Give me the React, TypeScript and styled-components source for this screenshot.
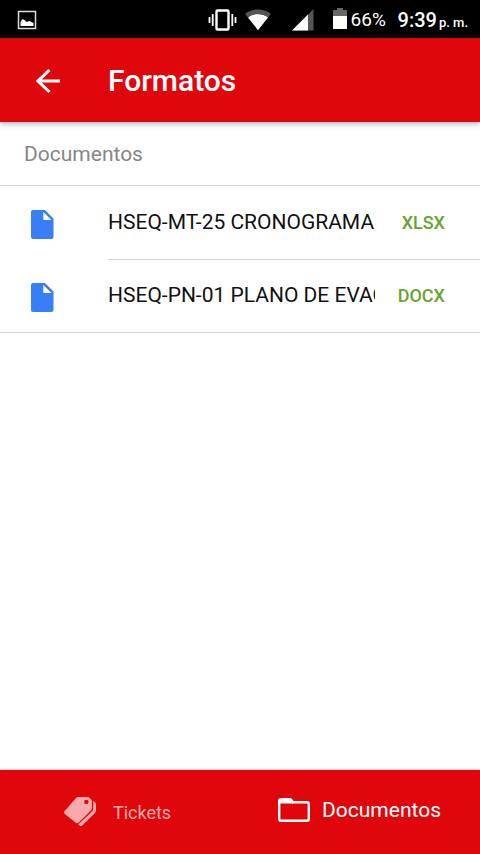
import React from "react";
import styled, { createGlobalStyle } from "styled-components";

const GlobalStyle = createGlobalStyle`
  * { box-sizing: border-box; }
  body {
    margin: 0;
    background: #fff;
    font-family: Roboto, sans-serif;
  }
`;

const Screen = styled.div`
  display: flex;
  flex-direction: column;
  min-height: 100vh;
`;

const StatusBar = styled.div`
  display: flex;
  align-items: center;
  height: 38px;
  padding: 1px 12px 0 17px;
  background: #000;
  color: #fff;
`;

const StatusIcons = styled.div`
  display: flex;
  align-items: center;
  margin-left: auto;
`;

const StatusIcon = styled.svg<{ $gap?: number }>`
  display: block;
  flex: none;
  margin-right: ${(p) => p.$gap ?? 0}px;
`;

const Battery = styled.span`
  width: 47px;
  font-size: 19px;
  line-height: 24px;
`;

const Clock = styled.span`
  font-size: 20px;
  font-weight: 500;
  line-height: 24px;
  white-space: nowrap;
`;

const Meridiem = styled.small`
  margin-left: 2px;
  font-size: 13px;
  line-height: 13px;
`;

const Toolbar = styled.header`
  position: relative;
  display: flex;
  align-items: center;
  height: 84px;
  padding: 2px 24px 0;
  background: #e0070c;
  color: #fff;
  box-shadow: 0 1px 6px rgba(0, 0, 30, 0.4);
`;

const BackButton = styled.button`
  display: flex;
  align-items: center;
  justify-content: center;
  width: 48px;
  height: 48px;
  margin-right: 36px;
  padding: 0;
  border: 0;
  background: none;
  color: inherit;
`;

const Title = styled.h1`
  margin: 0;
  font-size: 30px;
  font-weight: 500;
  line-height: 36px;
`;

const Content = styled.main`
  flex: 1;
`;

const ListHeader = styled.h2`
  margin: 0;
  padding: 18px 24px 17px;
  border-bottom: 1px solid #d6d6d6;
  color: #868686;
  font-size: 21px;
  font-weight: 400;
  line-height: 28px;
`;

const List = styled.ul`
  margin: 0;
  padding: 0;
  border-bottom: 1px solid #d6d6d6;
  list-style: none;
`;

const Row = styled.li`
  display: flex;
  align-items: stretch;

  & + & > a {
    border-top: 1px solid #d6d6d6;
  }
`;

const FileIcon = styled.svg`
  flex: none;
  align-self: center;
  width: 23px;
  height: 30px;
  margin: 4px 54px 0 31px;
`;

const FileLink = styled.a`
  display: flex;
  flex: 1;
  align-items: center;
  min-width: 0;
  height: 73px;
  padding-right: 35px;
  color: #111;
  text-decoration: none;
`;

const FileName = styled.span`
  flex: 1;
  min-width: 0;
  padding-bottom: 2px;
  overflow: hidden;
  font-size: 21px;
  line-height: 28px;
  white-space: nowrap;
`;

const FileType = styled.span`
  margin-left: 23px;
  color: #66a52f;
  font-size: 18px;
  font-weight: 500;
  line-height: 24px;
`;

const TabBar = styled.nav`
  display: grid;
  grid-template-columns: 1fr 1fr;
  height: 84px;
  background: #e0070c;
  box-shadow: 0 -1px 2px rgba(0, 0, 40, 0.16);
`;

const Tab = styled.button<{ $active?: boolean }>`
  display: flex;
  align-items: center;
  justify-content: center;
  gap: ${(p) => (p.$active ? 12 : 16)}px;
  padding: ${(p) => (p.$active ? "0 1px 5px 0" : "0 5px 1px 0")};
  border: 0;
  background: none;
  color: ${(p) => (p.$active ? "#fff" : "#f8a9ab")};
  font-family: inherit;
  font-size: ${(p) => (p.$active ? 21 : 18)}px;
  line-height: 28px;
`;

const TabLabel = styled.span<{ $active?: boolean }>`
  padding-top: ${(p) => (p.$active ? 0 : 3)}px;
`;

const files = [
  { name: "HSEQ-MT-25 CRONOGRAMA", type: "XLSX" },
  { name: "HSEQ-PN-01 PLANO DE EVAC", type: "DOCX" },
];

export default function App() {
  return (
    <>
      <GlobalStyle />
      <Screen>
        <StatusBar>
          <StatusIcon width="20" height="20" viewBox="0 0 20 20" aria-hidden="true">
            <rect x="1.500" y="1.500" width="17" height="17" fill="none" stroke="#ddd" strokeWidth="1.500" />
            <path d="M3.500 16v-4l2-3 2 1 2 2 3-1 2 1 2 1v3z" fill="#fff" />
          </StatusIcon>
          <StatusIcons>
            <StatusIcon $gap={8} width="29" height="22" viewBox="0 0 29 22" aria-hidden="true">
              <g fill="none" stroke="#fff">
                <rect x="8.500" y="1.500" width="12" height="19" rx="1" strokeWidth="2.400" />
                <path d="M1.500 8v6M27.500 8v6M4.700 5v12M24.300 5v12" strokeWidth="1.800" />
              </g>
            </StatusIcon>
            <StatusIcon $gap={21} width="26" height="22" viewBox="0 0 26 22" aria-hidden="true">
              <path d="M13 21L0 5C7-1 19-1 26 5z" fill="#555" />
              <path d="M13 21L3.700 8.500c5-4 13.600-4 18.600 0z" fill="#fff" />
              <path d="M0 5l3 4L13 21.500 23 9l3-4v17H0z" fill="#000" />
              <path d="M13 21L3.200 8.800c5-4.400 14.600-4.400 19.600 0z" fill="#fff" />
            </StatusIcon>
            <StatusIcon $gap={19} width="22" height="22" viewBox="0 0 22 22" aria-hidden="true">
              <path d="M0 21.500L21.500 0v21.500z" fill="#555" />
              <path d="M0 21.500L16 5.500v16z" fill="#fff" />
            </StatusIcon>
            <StatusIcon $gap={4} width="14" height="24" viewBox="0 0 14 24" aria-hidden="true">
              <path d="M0 2h4V0h6v2h4v7H0z" fill="#666" />
              <path d="M0 8h14v13H0z" fill="#fff" />
            </StatusIcon>
            <Battery>66%</Battery>
            <Clock>
              9:39<Meridiem>p. m.</Meridiem>
            </Clock>
          </StatusIcons>
        </StatusBar>
        <Toolbar>
          <BackButton type="button" aria-label="Volver">
            <svg width="24" height="24" viewBox="0 0 24 24" fill="none" stroke="currentColor" strokeWidth="3">
              <path d="M24 12H2M13.500 1L2 12l11.500 11" />
            </svg>
          </BackButton>
          <Title>Formatos</Title>
        </Toolbar>
        <Content>
          <ListHeader>Documentos</ListHeader>
          <List>
            {files.map((file) => (
              <Row key={file.name}>
                <FileIcon viewBox="0 0 23 30" aria-hidden="true">
                  <path
                    fill="#387ef5"
                    fillRule="evenodd"
                    d="M2 0H14l8.500 8.500v18.500a2 2 0 0 1-2 2H2A2 2 0 0 1 0 27V2A2 2 0 0 1 2 0zM12.300 2v8H20.500z"
                  />
                </FileIcon>
                <FileLink href="#">
                  <FileName>{file.name}</FileName>
                  <FileType>{file.type}</FileType>
                </FileLink>
              </Row>
            ))}
          </List>
        </Content>
        <TabBar>
          <Tab type="button">
            <svg width="33" height="30" viewBox="0 0 33 30" fill="currentColor" aria-hidden="true">
              <path
                fillRule="evenodd"
                d="M14.500 0H23q1.200 0 2 .6l2 1.700q.9.800.9 2V11q0 1.500-1.200 2.700L15 25.300q-2 1.700-3.800 0L.8 17Q-.7 15.500.7 13.900L11.800 1.200Q12.800 0 14.500 0zM22.300 2.700a2.200 2.200 0 1 0 0 4.400 2.200 2.200 0 0 0 0-4.400z"
              />
              <path d="M29.200 3.800l2 1.600q.8.700.8 1.800V13.500q0 1.500-1.200 2.700L18.500 28.300q-1.500 1.500-3 .3L14.200 27.600 28 14.600q1.200-1.200 1.200-2.800z" />
            </svg>
            <TabLabel>Tickets</TabLabel>
          </Tab>
          <Tab type="button" $active aria-current="page">
            <svg width="32" height="24" viewBox="0 0 32 24" aria-hidden="true">
              <path d="M1.200 6V3.200q0-2 2-2H12q1.200 0 2 1.500l.8 1.500H28.800q2 0 2 2v14.600q0 2-2 2H3.200q-2 0-2-2z" fill="none" stroke="currentColor" strokeWidth="2.400" />
              <path d="M1 5.400V2.500Q1 1 3 1h9.500l2.500 4.400z" fill="currentColor" />
            </svg>
            <TabLabel $active>Documentos</TabLabel>
          </Tab>
        </TabBar>
      </Screen>
    </>
  );
}
